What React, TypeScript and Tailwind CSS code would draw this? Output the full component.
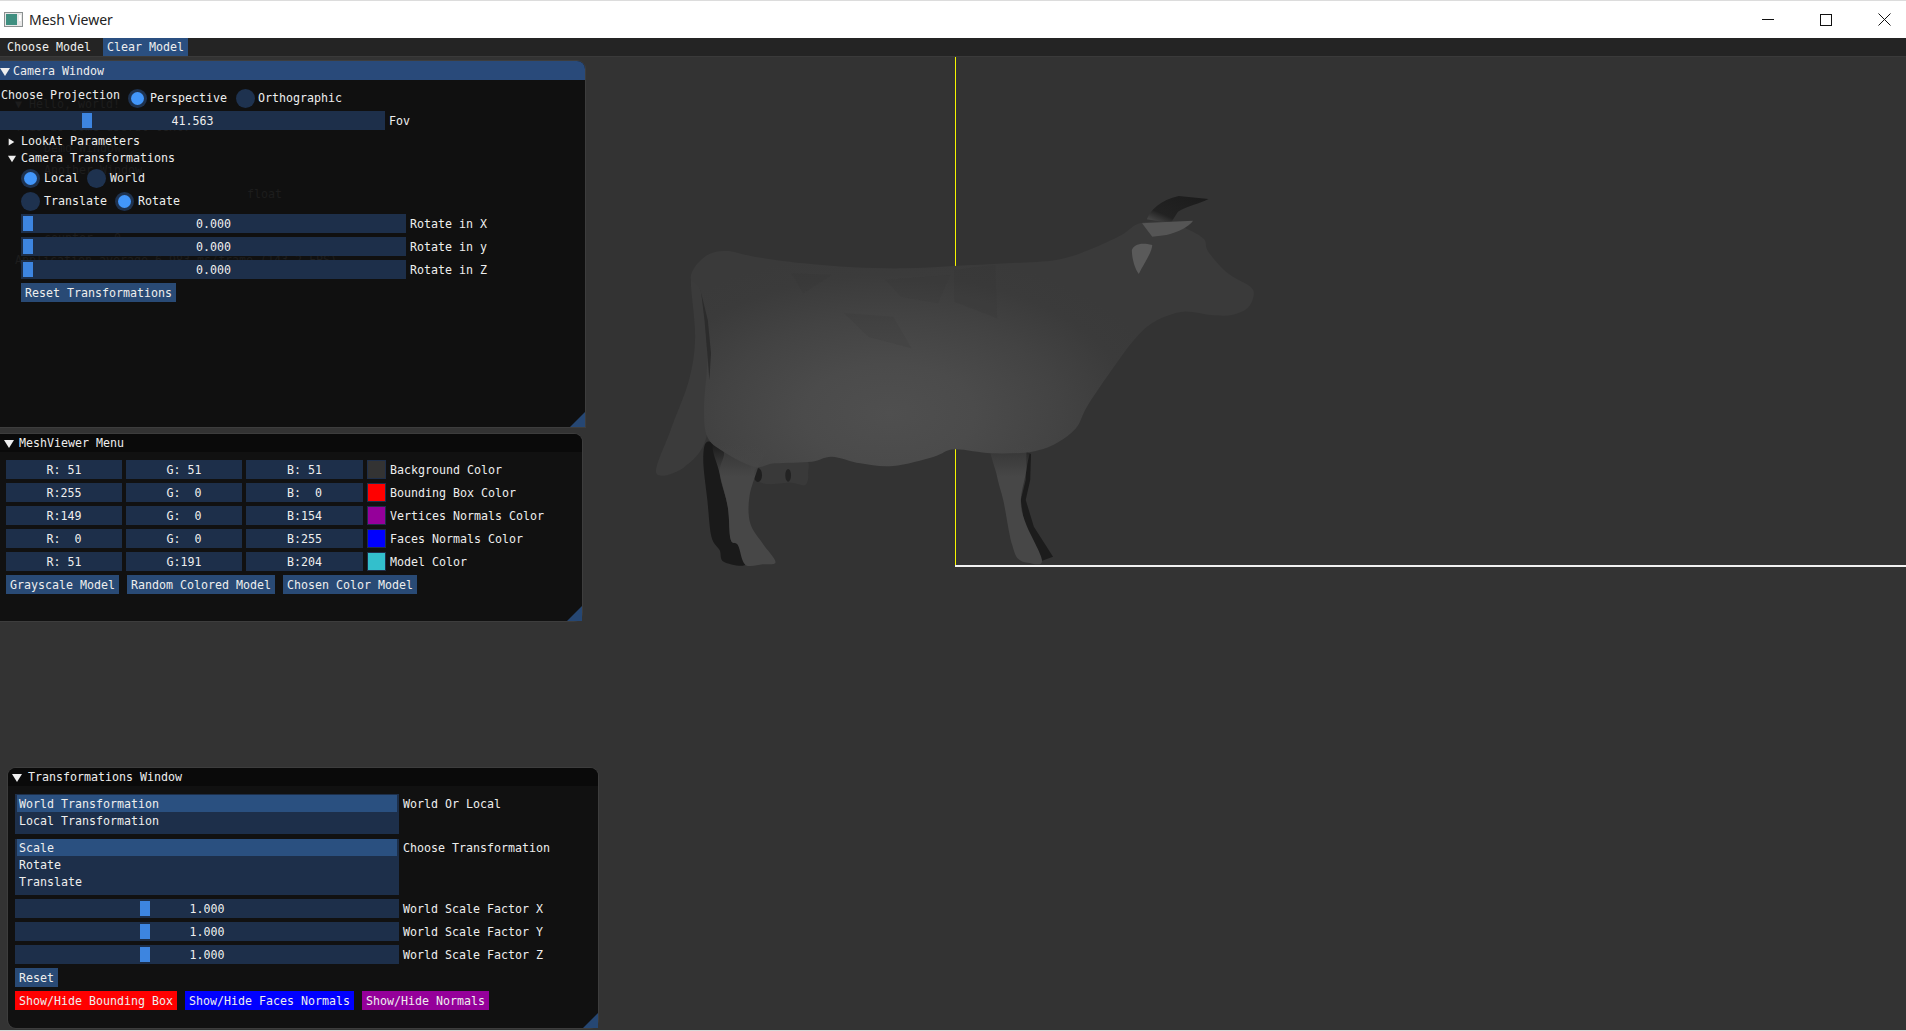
const mono = "font-['DejaVu_Sans_Mono','Liberation_Mono',monospace] text-[11.63px] leading-none text-[#eeeeee] whitespace-pre";

const Radio = ({ on, label, className = "", labelClass = "ml-[4px]" }: { on?: boolean; label: string; className?: string; labelClass?: string }) => (
  <div className={`flex items-center ${className}`}>
    <div className="w-[19px] h-[19px] rounded-full bg-[#1e324f] flex items-center justify-center">
      {on && <div className="w-[13px] h-[13px] rounded-full bg-[#4296fa]" />}
    </div>
    <span className={labelClass}>{label}</span>
  </div>
);

const Slider = ({ width, grab, value, label, className = "" }: { width: number; grab: number; value: string; label: string; className?: string }) => (
  <div className={`flex items-center h-[19px] ${className}`}>
    <div className="relative h-[19px] pt-[2px] bg-[#1d2f4a] flex items-center justify-center" style={{ width }}>
      <div className="absolute top-[2px] h-[15px] w-[10px] bg-[#3d85e0]" style={{ left: grab }} />
      <span className="relative">{value}</span>
    </div>
    <span className="ml-[4px] mt-[2px]">{label}</span>
  </div>
);

const Btn = ({ width, label, bg = "bg-[#294a75]" }: { width: number; label: string; bg?: string }) => (
  <div className={`h-[19px] pt-[2px] flex items-center justify-center ${bg}`} style={{ width }}>
    {label}
  </div>
);

const Grip = () => (
  <div className="absolute right-0 bottom-0 w-[15px] h-[15px] bg-[#264773] [clip-path:polygon(100%_0,100%_100%,0_100%)]" />
);

const Arrow = ({ open, className = "" }: { open?: boolean; className?: string }) => (
  <svg width="10" height="10" viewBox="0 0 10 10" className={className}>
    <polygon points={open ? "0,1 10,1 5,9" : "1,0 9,5 1,10"} fill="#eeeeee" />
  </svg>
);

const cell = "h-full pt-[2px] bg-[#1d2f4a] flex items-center justify-center";

const ColorRow = ({ r, g, b, swatch, label }: { r: string; g: string; b: string; swatch: string; label: string }) => (
  <div className="flex h-[19px] items-center">
    <div className={`w-[116px] ${cell}`}>{r}</div>
    <div className={`w-[116px] ml-[4px] ${cell}`}>{g}</div>
    <div className={`w-[117px] ml-[4px] ${cell}`}>{b}</div>
    <div className="w-[19px] h-full ml-[4px] border border-[#1f2f4a]" style={{ background: swatch }} />
    <span className="ml-[4px] mt-[2px]">{label}</span>
  </div>
);

const colorRows = [
  { r: "R: 51", g: "G: 51", b: "B: 51", swatch: "#333333", label: "Background Color" },
  { r: "R:255", g: "G:  0", b: "B:  0", swatch: "#ff0000", label: "Bounding Box Color" },
  { r: "R:149", g: "G:  0", b: "B:154", swatch: "#95009a", label: "Vertices Normals Color" },
  { r: "R:  0", g: "G:  0", b: "B:255", swatch: "#0000ff", label: "Faces Normals Color" },
  { r: "R: 51", g: "G:191", b: "B:204", swatch: "#33bfcc", label: "Model Color" },
];

// closed catmull-rom through the traced points
const smooth = (pts: number[][]) => {
  const n = pts.length;
  let d = `M${pts[0][0]} ${pts[0][1]}`;
  for (let i = 0; i < n; i++) {
    const p0 = pts[(i - 1 + n) % n];
    const p1 = pts[i];
    const p2 = pts[(i + 1) % n];
    const p3 = pts[(i + 2) % n];
    const c1x = p1[0] + (p2[0] - p0[0]) / 6;
    const c1y = p1[1] + (p2[1] - p0[1]) / 6;
    const c2x = p2[0] - (p3[0] - p1[0]) / 6;
    const c2y = p2[1] - (p3[1] - p1[1]) / 6;
    d += ` C${c1x} ${c1y} ${c2x} ${c2y} ${p2[0]} ${p2[1]}`;
  }
  return d + " Z";
};

const bodyPts = [
  [125, 300], [135, 260], [170, 222], [215, 213], [280, 230], [400, 250], [520, 262], [650, 265], [770, 258], [900, 250],
  [1020, 240], [1100, 210], [1180, 165], [1225, 130], [1300, 128], [1345, 150], [1382, 178], [1392, 215], [1440, 280],
  [1495, 320], [1503, 348], [1488, 385], [1450, 405], [1400, 405], [1330, 395], [1260, 425], [1210, 480], [1150, 580],
  [1095, 680], [1068, 745], [1020, 790], [960, 815], [862, 820], [770, 808], [720, 830], [620, 858], [540, 850],
  [470, 830], [420, 845], [330, 850], [280, 860], [205, 815], [165, 770], [157, 680], [165, 520], [150, 340],
];
const tailPts = [[125, 300], [150, 340], [165, 520], [165, 760], [110, 860], [40, 880], [75, 750], [120, 600], [135, 470]];
const udderPts = [[280, 850], [400, 838], [412, 880], [405, 915], [370, 908], [310, 912], [282, 895]];
const rearDark = [[165, 785], [155, 840], [165, 960], [175, 1070], [195, 1110], [205, 1145], [258, 1154], [240, 1095], [222, 1078], [215, 980], [195, 880], [205, 815]];
const rearLeg = [[185, 780], [310, 790], [290, 860], [268, 950], [270, 1030], [300, 1090], [332, 1146], [300, 1153], [258, 1154], [240, 1095], [222, 1078], [215, 980], [195, 880]];
const frontLeg = [[860, 780], [950, 780], [948, 860], [933, 960], [945, 1030], [985, 1142], [950, 1148], [925, 1135], [912, 1095], [905, 1060], [890, 960], [875, 890]];

const Cow = () => (
  <svg className="absolute left-[640px] top-[180px] w-[640px] h-[400px]" viewBox="0 0 1568 1200" preserveAspectRatio="none">
    <defs>
      <radialGradient id="body" gradientUnits="userSpaceOnUse" cx="610" cy="700" r="700" gradientTransform="translate(610 700) scale(1 0.7) translate(-610 -700)">
        <stop offset="0" stopColor="#4f4f4f" />
        <stop offset="0.3" stopColor="#4b4b4b" />
        <stop offset="0.6" stopColor="#434343" />
        <stop offset="0.85" stopColor="#3b3b3b" />
        <stop offset="1" stopColor="#3a3a3a" />
      </radialGradient>
      <linearGradient id="leg" gradientUnits="userSpaceOnUse" x1="0" y1="790" x2="0" y2="890">
        <stop offset="0" stopColor="#474747" stopOpacity="0" />
        <stop offset="1" stopColor="#474747" />
      </linearGradient>
      <linearGradient id="horn" x1="1" y1="0" x2="0" y2="1">
        <stop offset="0" stopColor="#1b1b1b" />
        <stop offset="0.7" stopColor="#222222" />
        <stop offset="1" stopColor="#555555" />
      </linearGradient>
    </defs>
    {/* far legs */}
    <path d={smooth(rearDark)} fill="#1a1a1a" />
    <path d="M947 815 L958 822 L956 900 L945 960 L965 1040 L1012 1130 L985 1142 L965 1100 L940 1020 L933 960 L945 900 Z" fill="#1c1c1c" />
    {/* udder */}
    <path d={smooth(udderPts)} fill="#393939" />
    <ellipse cx="289" cy="885" rx="10" ry="21" fill="#1f1f1f" />
    <ellipse cx="363" cy="886" rx="7" ry="19" fill="#232323" />
    {/* tail */}
    <path d={smooth(tailPts)} fill="#3b3b3b" />
    {/* horn */}
    <path d="M1242 118 C1250 90 1275 60 1320 48 L1393 57 C1370 72 1340 78 1318 95 L1300 130 Z" fill="url(#horn)" />
    {/* body and head */}
    <path d={smooth(bodyPts)} fill="url(#body)" />
    <path d="M150 340 L158 420 L165 520 L170 600 L174 520 L166 420 Z" fill="#2c2c2c" />
    {/* near legs */}
    <path d={smooth(rearLeg)} fill="url(#leg)" />
    <path d={smooth(frontLeg)} fill="url(#leg)" />
    {/* facets on the back */}
    <path d="M370 280 L470 285 L400 340 Z" fill="#2f2f2f" opacity="0.12" />
    <path d="M770 270 L870 255 L875 415 L770 365 Z" fill="#2f2f2f" opacity="0.16" />
    <path d="M500 400 L620 410 L665 505 L560 470 Z" fill="#2f2f2f" opacity="0.14" />
    <path d="M600 300 L760 285 L730 370 L640 350 Z" fill="#2f2f2f" opacity="0.1" />
    {/* pale horn + ear */}
    <path d="M1230 130 L1300 125 L1355 122 C1345 140 1320 155 1290 165 L1255 170 Z" fill="#555555" />
    <path d="M1205 210 C1210 195 1225 186 1255 195 C1255 215 1235 250 1222 282 C1212 265 1205 235 1205 210 Z" fill="#5a5a5a" />
  </svg>
);

export default function App() {
  return (
    <div className={`relative w-[1906px] h-[1031px] overflow-hidden bg-[#333333] flex flex-col ${mono}`}>
      {/* window title bar */}
      <div className="h-[38px] bg-white border-t border-[#dcdcdc] flex items-center shrink-0">
        <svg width="19" height="15" viewBox="0 0 19 15" className="ml-[4px]">
          <rect x="0.5" y="0.5" width="18" height="14" fill="#e8e8e8" stroke="#8a9090" />
          <rect x="2" y="2" width="11" height="11" fill="#3f8f80" />
          <rect x="15" y="3" width="2" height="6" fill="#ffffff" />
        </svg>
        <span className="ml-[6px] font-['Noto_Sans','Open_Sans',sans-serif] text-[14px] text-[#222222]">Mesh Viewer</span>
        <div className="ml-auto flex items-center">
          <svg width="12" height="2" className="mr-[46px]"><rect width="12" height="1" fill="#111111" /></svg>
          <svg width="12" height="12" className="mr-[46px]"><rect x="0.5" y="0.5" width="11" height="11" fill="none" stroke="#111111" /></svg>
          <svg width="13" height="13" className="mr-[15px]"><path d="M0.5 0.5 L12.5 12.5 M12.5 0.5 L0.5 12.5" stroke="#111111" fill="none" /></svg>
        </div>
      </div>

      {/* menu bar */}
      <div className="h-[19px] bg-[#242424] border-b border-[#3a3a3a] flex items-stretch shrink-0">
        <div className="pl-[7px] pt-[2px] w-[103px] flex items-center">Choose Model</div>
        <div className="w-[85px] pt-[2px] bg-[#2a4f80] flex items-center justify-center">Clear Model</div>
      </div>

      {/* gl viewport */}
      <div className="absolute left-[955px] top-[57px] w-px h-[508px] bg-[#f5f500]" />
      <div className="absolute left-[955px] top-[565px] right-0 h-[2px] bg-[#f2f2f2]" />
      <Cow />

      {/* camera window */}
      <div className="absolute left-0 top-[61px] w-[585px] h-[366px] bg-[#101010] rounded-tr-[8px] ring-1 ring-[#3d3d3d]">
        <div className="h-[19px] pt-[2px] bg-[#294a7a] rounded-tr-[8px] flex items-center">
          <Arrow open />
          <span className="ml-[3px]">Camera Window</span>
        </div>
        {/* faint demo window showing through */}
        <div className="absolute inset-0 text-[#1d1d1d]">
          <span className="absolute left-[15px] top-[38px]">▼ Hello, world!</span>
          <span className="absolute left-[15px] top-[61px]">This is some useful text.</span>
          <span className="absolute left-[44px] top-[82px]">Demo Window</span>
          <span className="absolute left-[44px] top-[104px]">Another Window</span>
          <span className="absolute left-[247px] top-[128px]">float</span>
          <span className="absolute left-[44px] top-[172px]">counter = 0</span>
          <span className="absolute left-[15px] top-[194px]">Application average 6.983 ms/frame (143.2 FPS)</span>
        </div>
        <div className="relative flex flex-col pt-[9px]">
          <div className="flex items-center h-[19px]">
            <span className="pl-[1px] -mt-[6px]">Choose Projection</span>
            <Radio on label="Perspective" className="ml-[8px]" labelClass="ml-[3px]" />
            <Radio label="Orthographic" className="ml-[9px]" labelClass="ml-[3px]" />
          </div>
          <Slider width={385} grab={82} value="41.563" label="Fov" className="mt-[3px]" />
          <div className="flex items-center h-[14px] pt-[2px] mt-[4px] pl-[8px]">
            <Arrow className="w-[7px] h-[8px]" />
            <span className="ml-[6px]">LookAt Parameters</span>
          </div>
          <div className="flex items-center h-[14px] pt-[2px] mt-[3px] pl-[8px]">
            <Arrow open className="w-[8px] h-[8px]" />
            <span className="ml-[5px]">Camera Transformations</span>
          </div>
          <div className="flex flex-col pl-[21px] mt-[4px]">
            <div className="flex h-[19px]">
              <Radio on label="Local" />
              <Radio label="World" className="ml-[8px]" />
            </div>
            <div className="flex h-[19px] mt-[4px]">
              <Radio label="Translate" />
              <Radio on label="Rotate" className="ml-[8px]" />
            </div>
            <Slider width={385} grab={2} value="0.000" label="Rotate in X" className="mt-[3px]" />
            <Slider width={385} grab={2} value="0.000" label="Rotate in y" className="mt-[4px]" />
            <Slider width={385} grab={2} value="0.000" label="Rotate in Z" className="mt-[4px]" />
            <div className="mt-[4px]">
              <Btn width={155} label="Reset Transformations" />
            </div>
          </div>
        </div>
        <Grip />
      </div>

      {/* mesh viewer menu */}
      <div className="absolute left-0 top-[434px] w-[582px] h-[187px] bg-[#111111] rounded-r-[8px] ring-1 ring-[#3d3d3d]">
        <div className="h-[18px] pt-[2px] bg-[#0a0a0a] rounded-tr-[8px] flex items-center">
          <Arrow open className="ml-[4px]" />
          <span className="ml-[5px]">MeshViewer Menu</span>
        </div>
        <div className="flex flex-col gap-[4px] pt-[8px] pl-[6px]">
          {colorRows.map((row) => (
            <ColorRow key={row.label} {...row} />
          ))}
          <div className="flex gap-[8px]">
            <Btn width={113} label="Grayscale Model" />
            <Btn width={148} label="Random Colored Model" />
            <Btn width={134} label="Chosen Color Model" />
          </div>
        </div>
        <Grip />
      </div>

      {/* transformations window */}
      <div className="absolute left-[8px] top-[768px] w-[590px] h-[260px] bg-[#111111] rounded-[8px] ring-1 ring-[#3d3d3d]">
        <div className="h-[18px] pt-[2px] bg-[#0a0a0a] rounded-t-[8px] flex items-center">
          <Arrow open className="ml-[4px]" />
          <span className="ml-[6px]">Transformations Window</span>
        </div>
        <div className="flex flex-col pt-[8px] pl-[7px]">
          <div className="flex">
            <div className="w-[384px] h-[40px] bg-[#1d2f4a] px-[2px] pt-[1px]">
              <div className="h-[17px] pt-[2px] bg-[#2a5080] flex items-center pl-[2px]">World Transformation</div>
              <div className="h-[17px] pt-[2px] flex items-center pl-[2px]">Local Transformation</div>
            </div>
            <span className="ml-[4px] mt-[5px]">World Or Local</span>
          </div>
          <div className="flex mt-[5px]">
            <div className="w-[384px] h-[56px] bg-[#1d2f4a] px-[2px]">
              <div className="h-[17px] pt-[2px] bg-[#2a5080] flex items-center pl-[2px]">Scale</div>
              <div className="h-[17px] pt-[2px] flex items-center pl-[2px]">Rotate</div>
              <div className="h-[17px] pt-[2px] flex items-center pl-[2px]">Translate</div>
            </div>
            <span className="ml-[4px] mt-[4px]">Choose Transformation</span>
          </div>
          <Slider width={384} grab={125} value="1.000" label="World Scale Factor X" className="mt-[4px]" />
          <Slider width={384} grab={125} value="1.000" label="World Scale Factor Y" className="mt-[4px]" />
          <Slider width={384} grab={125} value="1.000" label="World Scale Factor Z" className="mt-[4px]" />
          <div className="mt-[4px]">
            <Btn width={43} label="Reset" />
          </div>
          <div className="flex gap-[8px] mt-[4px]">
            <Btn width={162} label="Show/Hide Bounding Box" bg="bg-[#ff0000]" />
            <Btn width={169} label="Show/Hide Faces Normals" bg="bg-[#0000ff]" />
            <Btn width={127} label="Show/Hide Normals" bg="bg-[#95009a]" />
          </div>
        </div>
        <Grip />
      </div>

      <div className="absolute left-0 right-0 bottom-0 h-px bg-[#d8d8d8]" />
    </div>
  );
}
